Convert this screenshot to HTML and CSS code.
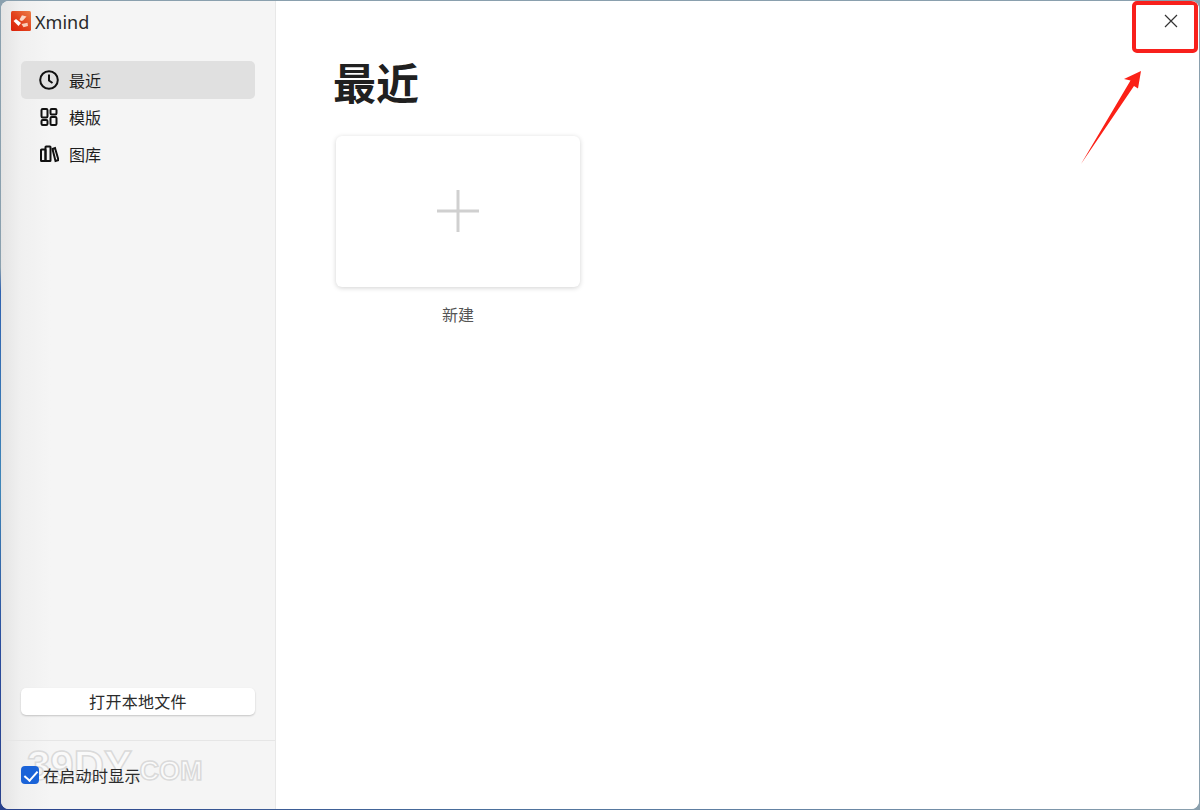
FILE: index.html
```html
<!DOCTYPE html>
<html lang="zh-CN">

<head>
    <meta charset="UTF-8">
    <title>Xmind</title>
    <link rel="stylesheet" href="styles.css">
</head>

<body>
    <div class="window">
        <aside class="sidebar">
            <div class="brand">
                <svg class="brand-logo" viewBox="0 0 20 20">
                    <defs>
                        <linearGradient id="logoFill" x1="0" y1="1" x2="1" y2="0">
                            <stop offset="0" stop-color="#dc1f08" />
                            <stop offset=".5" stop-color="#e2441e" />
                            <stop offset="1" stop-color="#ec8048" />
                        </linearGradient>
                    </defs>
                    <rect width="20" height="20" rx="1.5" fill="url(#logoFill)" />
                    <path d="M2.5 10 5 8l5 4-2.500 3z" fill="#fff" />
                    <path d="M8.5 8.500 11 4.200l4.500 1.300-3.500 4-2 .5z" fill="#fbd9c8" />
                    <path d="M10.5 13 16.500 11.700 17 15l-4.500 1.300z" fill="#f9cdb8" />
                </svg>
                <span class="brand-name">Xmind</span>
            </div>

            <nav class="nav">
                <a class="nav-item active">
                    <svg class="nav-icon" viewBox="0 0 20 20">
                        <circle cx="10" cy="10" r="8.8" />
                        <path d="M10 4.500v6l3.500 2.500" />
                    </svg>
                    <span>最近</span>
                </a>
                <a class="nav-item">
                    <svg class="nav-icon" viewBox="0 0 20 20">
                        <rect x="2.5" y="2" width="6" height="8.5" rx="1.2" />
                        <rect x="11.5" y="2" width="6" height="5.5" rx="1.2" />
                        <rect x="2.5" y="13" width="6" height="5" rx="1.2" />
                        <rect x="11.5" y="10" width="6" height="8" rx="1.2" />
                    </svg>
                    <span>模版</span>
                </a>
                <a class="nav-item">
                    <svg class="nav-icon" viewBox="0 0 20 20">
                        <rect x="2" y="5.5" width="4.5" height="11.5" rx=".6" />
                        <rect x="6.5" y="2.5" width="5" height="14.5" rx=".6" />
                        <path d="M13.5 5l2.500-1 3.500 12-3 1z" />
                    </svg>
                    <span>图库</span>
                </a>
            </nav>

            <div class="open-row">
                <button class="open-btn">打开本地文件</button>
            </div>

            <div class="watermark">39DY<small>.COM</small></div>
            <label class="startup">
                <input type="checkbox" checked>
                <span>在启动时显示</span>
            </label>
        </aside>

        <main class="content">
            <h1>最近</h1>
            <div class="new-card">
                <div class="card-box">
                    <svg class="plus" viewBox="0 0 44 44">
                        <path d="M22 1v42M1 22h42" />
                    </svg>
                </div>
                <div class="card-label">新建</div>
            </div>

            <svg class="close-x" viewBox="0 0 14 14">
                <path d="M1 1l12 12M13 1 1 13" />
            </svg>
            <div class="red-box"></div>
            <svg class="arrow" viewBox="0 0 62 94">
                <path d="M0 93 49.500 9.500 43 8 60 0 57 17.500 53 15z" />
            </svg>
        </main>
    </div>
</body>

</html>
```
FILE: styles.css
```css
* {
    box-sizing: border-box;
}

html,
body {
    height: 100%;
}

body {
    margin: 0;
    padding: 1px;
    overflow: hidden;
    font-family: "Noto Sans CJK SC", "Liberation Sans", sans-serif;
    background:
        linear-gradient(180deg, #8aa0ae 0, #8aa0ae 33%, #2f62b0 36%, #3f86b8 60%, #2a4c9c 80%, #28418c 100%) 0 0 / 2px 100% no-repeat,
        linear-gradient(90deg, #28418c 0, #4a6f9c 40%, #8aa0ae 100%) 0 100% / 100% 8px no-repeat,
        #8aa0ae;
}

.window {
    display: flex;
    height: 100%;
    border-radius: 8px;
    overflow: hidden;
    background: #fff;
}

/* 左侧栏 */
.sidebar {
    position: relative;
    display: flex;
    flex-direction: column;
    flex: 0 0 275px;
    background: linear-gradient(90deg, #e4e4e4 0, #f0f0f0 20px, #f5f5f5 50px);
    border-right: 1px solid #e8e8e8;
}

.brand {
    display: flex;
    align-items: center;
    gap: 4px;
    height: 40px;
    padding: 0 0 0 10px;
}

.brand-logo {
    width: 20px;
    height: 20px;
}

.brand-name {
    margin-top: 1px;
    font-family: "Noto Sans", sans-serif;
    font-size: 18px;
    color: #2a2a2a;
}

.nav {
    display: flex;
    flex-direction: column;
    padding: 20px 20px 0;
}

.nav-item {
    display: flex;
    align-items: center;
    gap: 10px;
    height: 38px;
    margin-bottom: -1px;
    padding-left: 18px;
    border-radius: 5px;
    font-size: 16px;
    color: #1d1d1d;
}

.nav-item.active {
    background: #e0e0e0;
}

.nav-icon {
    width: 20px;
    height: 20px;
    fill: none;
    stroke: #111;
    stroke-width: 2;
}

.open-row {
    margin-top: auto;
    padding: 0 20px 25px;
    border-bottom: 1px solid #e6e6e6;
}

.open-btn {
    display: block;
    width: 100%;
    height: 27px;
    padding: 0 0 2px;
    border: none;
    border-radius: 5px;
    background: #fff;
    box-shadow: 0 1px 2px rgba(0, 0, 0, 0.2);
    font-family: inherit;
    font-size: 16px;
    letter-spacing: 0.3px;
    color: #2b2b2b;
}

.startup {
    position: relative;
    display: flex;
    align-items: center;
    gap: 4px;
    height: 68px;
    padding-left: 20px;
    font-size: 16px;
    letter-spacing: 0.3px;
    color: #2b2b2b;
}

.startup input {
    position: relative;
    width: 18px;
    height: 18px;
    margin: 0;
    appearance: none;
    border-radius: 4px;
    background: #1a63d8;
}

.startup input::after {
    content: "";
    position: absolute;
    left: 6px;
    top: 2px;
    width: 6px;
    height: 11px;
    border: solid #fff;
    border-width: 0 2.5px 2.5px 0;
    transform: rotate(42deg);
}

/* 水印 */
.watermark {
    position: absolute;
    left: 26px;
    bottom: 15px;
    font-family: "Liberation Sans", sans-serif;
    font-size: 42px;
    font-weight: bold;
    line-height: 46px;
    white-space: nowrap;
    color: rgba(255, 255, 255, 0.5);
    -webkit-text-stroke: 1.5px #dadada;
    pointer-events: none;
}

.watermark small {
    font-size: 27px;
}

/* 右侧内容 */
.content {
    position: relative;
    flex: 1;
    padding: 0 0 0 60px;
    background: #fff;
}

h1 {
    margin: 54px 0 29px -3px;
    font-size: 43px;
    font-weight: bold;
    line-height: 52px;
    color: #202020;
}

.new-card {
    width: 244px;
}

.card-box {
    display: flex;
    align-items: center;
    justify-content: center;
    height: 151px;
    padding-bottom: 2px;
    border-radius: 6px;
    background: #fff;
    box-shadow: 0 1px 5px rgba(0, 0, 0, 0.18);
}

.plus {
    width: 44px;
    height: 44px;
    fill: none;
    stroke: #d0d0d0;
    stroke-width: 3;
}

.card-label {
    margin-top: 15px;
    font-size: 16px;
    line-height: 24px;
    text-align: center;
    color: #555;
}

.close-x {
    position: absolute;
    top: 13px;
    right: 21px;
    width: 14px;
    height: 14px;
    fill: none;
    stroke: #333;
    stroke-width: 1.2;
}

.red-box {
    position: absolute;
    top: 0;
    right: 1px;
    width: 66px;
    height: 52px;
    border: 4px solid #f8201c;
    border-radius: 5px;
}

.arrow {
    position: absolute;
    top: 70px;
    left: 805px;
    width: 62px;
    height: 94px;
    fill: #fb2117;
}
```
